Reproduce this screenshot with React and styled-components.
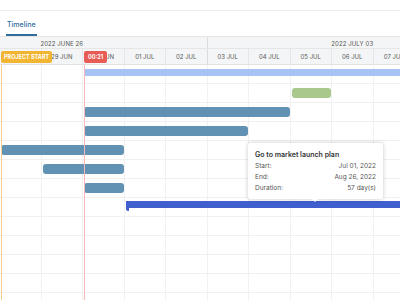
import React from "react";
import styled, { createGlobalStyle } from "styled-components";

const DAY = 41.5;
const ROW = 19;

const GlobalStyle = createGlobalStyle`
  html, body {
    margin: 0;
    padding: 0;
    background: #ffffff;
    font-family: Inter, "Noto Sans", sans-serif;
  }
`;

const Page = styled.div`
  width: 400px;
  height: 300px;
  overflow: hidden;
  display: flex;
  flex-direction: column;
  background: #fff;
`;

const TopStrip = styled.div`
  height: 10px;
  border-bottom: 1px solid #ececec;
`;

const TabBar = styled.div`
  height: 25px;
  display: flex;
  align-items: flex-end;
  padding-left: 6px;
  border-bottom: 1px solid #e6e6e6;
`;

const Tab = styled.div`
  font-size: 7px;
  font-weight: 500;
  color: #2f6f9f;
  height: 24px;
  display: flex;
  align-items: center;
  padding: 2px 1px 0;
  box-sizing: border-box;
  border-bottom: 2px solid #2f6f9f;
`;

const Header = styled.div`
  background: #f4f5f6;
  border-bottom: 1px solid #e2e2e2;
  display: flex;
  flex-direction: column;
  overflow: hidden;
  position: relative;
`;

const HeaderRow = styled.div`
  display: flex;
  height: ${(p) => p.$h}px;
  margin-left: ${(p) => p.$offset || 0}px;
  border-bottom: ${(p) => (p.$border ? "1px solid #e6e6e6" : "none")};
  box-sizing: border-box;
`;

const WeekCell = styled.div`
  flex: 0 0 ${DAY * 7}px;
  box-sizing: border-box;
  border-right: 1px solid #dcdcdc;
  display: flex;
  align-items: center;
  justify-content: center;
  font-size: 6px;
  color: #555;
  letter-spacing: 0.1px;
  padding-top: 1px;
`;

const DayCell = styled.div`
  flex: 0 0 ${DAY}px;
  box-sizing: border-box;
  border-right: 1px solid ${(p) => (p.$week ? "#dcdcdc" : "#e6e6e6")};
  display: flex;
  align-items: center;
  justify-content: center;
  font-size: 6px;
  color: #555;
`;

const Badge = styled.div`
  position: absolute;
  top: 14px;
  left: ${(p) => p.$left}px;
  height: 12px;
  padding: 0 ${(p) => p.$pad}px;
  background: ${(p) => p.$bg};
  color: #fff;
  font-size: 5.5px;
  font-weight: 700;
  border-radius: 2px;
  display: flex;
  align-items: center;
`;

const Body = styled.div`
  flex: 1;
  position: relative;
  overflow: hidden;
  background-image: repeating-linear-gradient(
    to right,
    transparent 0,
    transparent ${DAY - 1}px,
    #f1f1f1 ${DAY - 1}px,
    #f1f1f1 ${DAY}px
  );
`;

const Row = styled.div`
  height: ${ROW}px;
  box-sizing: border-box;
  border-bottom: 1px solid #f0f0f0;
  position: relative;
`;

const Bar = styled.div`
  position: absolute;
  top: 4px;
  height: 10px;
  border-radius: 3px;
  background: ${(p) => p.$color};
`;

const SummaryBar = styled.div`
  position: absolute;
  top: ${(p) => p.$top}px;
  height: 7px;
  background: ${(p) => p.$color};
  border-top-left-radius: 3px;
  &::before {
    content: "";
    position: absolute;
    left: 0;
    top: 0;
    width: 3px;
    height: ${(p) => (p.$tick ? 10 : 7)}px;
    border-radius: 0 0 0 2px;
    background: ${(p) => p.$color};
  }
`;

const Marker = styled.div`
  position: absolute;
  top: 0;
  bottom: 0;
  left: ${(p) => p.$left}px;
  width: 1px;
  background: ${(p) => p.$color};
`;

const Tooltip = styled.div`
  position: absolute;
  left: 248px;
  top: 78px;
  width: 135px;
  box-sizing: border-box;
  padding: 7px 7px 6px 7px;
  background: #fff;
  border-radius: 2px;
  box-shadow: 0 0 4px rgba(0, 0, 0, 0.22);
  display: flex;
  flex-direction: column;
  gap: 2px;
  &::after {
    content: "";
    position: absolute;
    left: 64px;
    bottom: -3px;
    border-left: 3px solid transparent;
    border-right: 3px solid transparent;
    border-top: 3px solid #fff;
  }
`;

const TipTitle = styled.div`
  font-size: 7px;
  font-weight: 600;
  color: #333;
  margin-bottom: 1px;
`;

const TipLine = styled.div`
  display: flex;
  justify-content: space-between;
  font-size: 6.5px;
  color: #555;
  line-height: 9px;
`;

const days = ["28 JUN", "29 JUN", "30 JUN", "01 JUL", "02 JUL", "03 JUL", "04 JUL", "05 JUL", "06 JUL", "07 JUL"];

const bars = [
  { row: 1, from: 7, to: 8, color: "#a8c88c" },
  { row: 2, from: 2, to: 7, color: "#6192b3" },
  { row: 3, from: 2, to: 6, color: "#6192b3" },
  { row: 4, from: 0, to: 3, color: "#6192b3" },
  { row: 5, from: 1, to: 3, color: "#6192b3" },
  { row: 6, from: 2, to: 3, color: "#6192b3" },
];

export default function App() {
  const rows = Array.from({ length: 12 }, (_, i) => i);
  return (
    <Page>
      <GlobalStyle />
      <TopStrip />
      <TabBar>
        <Tab>Timeline</Tab>
      </TabBar>
      <Header>
        <HeaderRow $h={12} $offset={-DAY * 2} $border>
          <WeekCell>2022 JUNE 26</WeekCell>
          <WeekCell>2022 JULY 03</WeekCell>
        </HeaderRow>
        <HeaderRow $h={15}>
          {days.map((d, i) => (
            <DayCell key={d} $week={i === 4}>
              {d}
            </DayCell>
          ))}
        </HeaderRow>
        <Badge $left={1} $pad={3} $bg="#f2b531">PROJECT START</Badge>
        <Badge $left={84} $pad={4} $bg="#e75c55">00:21</Badge>
      </Header>
      <Body>
        {rows.map((r) => (
          <Row key={r}>
            {r === 0 && (
              <SummaryBar $top={4} $color="#a6c3f3" style={{ left: DAY * 2 + 1, right: 0 }} />
            )}
            {r === 7 && (
              <SummaryBar $top={3} $tick $color="#3e5fcd" style={{ left: DAY * 3 + 1, right: 0 }} />
            )}
            {bars
              .filter((b) => b.row === r)
              .map((b, i) => (
                <Bar
                  key={i}
                  $color={b.color}
                  style={{ left: b.from * DAY + 1, width: (b.to - b.from) * DAY - 2 }}
                />
              ))}
          </Row>
        ))}
        <Marker $left={1} $color="#f7cf8a" />
        <Marker $left={84} $color="#f6b8b8" />
        <Tooltip>
          <TipTitle>Go to market launch plan</TipTitle>
          <TipLine>
            <span>Start:</span>
            <span>Jul 01, 2022</span>
          </TipLine>
          <TipLine>
            <span>End:</span>
            <span>Aug 26, 2022</span>
          </TipLine>
          <TipLine>
            <span>Duration:</span>
            <span>57 day(s)</span>
          </TipLine>
        </Tooltip>
      </Body>
    </Page>
  );
}
